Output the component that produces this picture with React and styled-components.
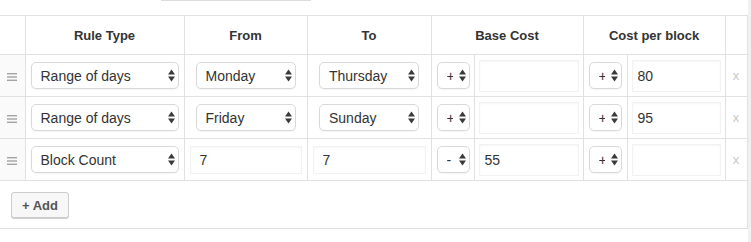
import React from 'react';
import styled, { createGlobalStyle } from 'styled-components';

const GlobalStyle = createGlobalStyle`
  html, body {
    margin: 0;
    padding: 0;
    background: #f1f1f1;
  }
  body {
    font-family: "Liberation Sans", Arial, sans-serif;
    color: #333;
  }
`;

const Panel = styled.div`
  width: 748px;
  min-height: 242px;
  background: #fff;
`;

const TopField = styled.div`
  margin-left: 161px;
  width: 150px;
  height: 1px;
  background: #ddd;
  margin-bottom: 14px;
`;

const Table = styled.table`
  width: 747px;
  border-collapse: collapse;
  table-layout: fixed;

  th, td {
    border: 1px solid #e1e1e1;
    padding: 0;
  }
  tr > :first-child {
    border-left: none;
  }
`;

const HeadCell = styled.th`
  height: 38px;
  font-size: 13px;
  font-weight: bold;
  color: #333;
  text-align: center;
  vertical-align: middle;
`;

const Cell = styled.td`
  height: 41px;
  vertical-align: middle;
  padding: 0 ${p => p.$pad ?? 5}px !important;
`;

const HandleCell = styled.td`
  height: 41px;
  background: #fafafa;
  text-align: center;
  vertical-align: middle;
`;

const DeleteCell = styled.td`
  text-align: center;
  vertical-align: middle;
  color: #c8c8c8;
  font-size: 13px;
`;

const SelectBox = styled.div`
  position: relative;
  width: ${p => (p.$width ? `${p.$width}px` : '100%')};
  margin: ${p => (p.$center ? '0 auto' : '0')};
`;

const NativeSelect = styled.select`
  appearance: none;
  -webkit-appearance: none;
  display: block;
  width: 100%;
  height: 27px;
  margin: 0;
  border: 1px solid #d9d9d9;
  border-radius: 5px;
  background: #fff;
  box-shadow: 0 1px 1px rgba(0, 0, 0, 0.04);
  font: 14px "Liberation Sans", Arial, sans-serif;
  color: #333;
  padding: 0 16px 0 ${p => p.$pad ?? 9}px;
  outline: none;
`;

const Arrows = styled.svg`
  position: absolute;
  right: 4px;
  top: 7px;
  pointer-events: none;
`;

const TextInput = styled.input`
  display: block;
  box-sizing: border-box;
  width: 100%;
  height: ${p => p.$h ?? 30}px;
  margin: 0;
  border: 1px solid #f2f2f2;
  box-shadow: inset 0 1px 2px rgba(0, 0, 0, 0.04);
  background: #fff;
  font: 14px "Liberation Sans", Arial, sans-serif;
  color: #333;
  padding: 0 0 0 ${p => p.$pad ?? 8}px;
  outline: none;
`;

const FootCell = styled.td`
  padding: 11px 11px 10px !important;
`;

const AddButton = styled.button`
  display: block;
  height: 26px;
  width: 58px;
  padding: 0;
  border: 1px solid #cdcdcd;
  border-radius: 3px;
  background: #f7f7f7;
  box-shadow: 0 1px 0 #cfcfcf;
  font: bold 13px "Liberation Sans", Arial, sans-serif;
  color: #555;
  cursor: pointer;
`;

function Select({ value, options, width, center, pad }) {
  return (
    <SelectBox $width={width} $center={center}>
      <NativeSelect defaultValue={value} $pad={pad}>
        {options.map(o => (
          <option key={o}>{o}</option>
        ))}
      </NativeSelect>
      <Arrows width="7" height="13" viewBox="0 0 7 13">
        <polygon points="3.5,0.5 7,5.5 0,5.5" fill="#3a3a3a" />
        <polygon points="0,7.5 7,7.5 3.5,12.5" fill="#3a3a3a" />
      </Arrows>
    </SelectBox>
  );
}

function Handle() {
  return (
    <svg width="10" height="8" viewBox="0 0 10 8">
      <rect x="0" y="0" width="10" height="1.4" fill="#a3a3a3" />
      <rect x="0" y="3.3" width="10" height="1.4" fill="#a3a3a3" />
      <rect x="0" y="6.6" width="10" height="1.4" fill="#a3a3a3" />
    </svg>
  );
}

const ruleTypes = ['Range of days', 'Block Count', 'Date range', 'Time range'];
const days = ['Monday', 'Tuesday', 'Wednesday', 'Thursday', 'Friday', 'Saturday', 'Sunday'];
const signs = ['+', '-', '×', '÷'];

const rules = [
  { type: 'Range of days', from: 'Monday', to: 'Thursday', baseSign: '+', base: '', costSign: '+', cost: '80' },
  { type: 'Range of days', from: 'Friday', to: 'Sunday', baseSign: '+', base: '', costSign: '+', cost: '95' },
  { type: 'Block Count', from: '7', to: '7', baseSign: '-', base: '55', costSign: '+', cost: '', plain: true },
];

export default function App() {
  return (
    <Panel>
      <GlobalStyle />
      <TopField />
      <Table>
        <colgroup>
          <col style={{ width: 25 }} />
          <col style={{ width: 159 }} />
          <col style={{ width: 123 }} />
          <col style={{ width: 124 }} />
          <col style={{ width: 43 }} />
          <col style={{ width: 109 }} />
          <col style={{ width: 44 }} />
          <col style={{ width: 98 }} />
          <col style={{ width: 22 }} />
        </colgroup>
        <thead>
          <tr>
            <HeadCell />
            <HeadCell>Rule Type</HeadCell>
            <HeadCell>From</HeadCell>
            <HeadCell>To</HeadCell>
            <HeadCell colSpan={2}>Base Cost</HeadCell>
            <HeadCell colSpan={2}>Cost per block</HeadCell>
            <HeadCell />
          </tr>
        </thead>
        <tbody>
          {rules.map((r, i) => (
            <tr key={i}>
              <HandleCell>
                <Handle />
              </HandleCell>
              <Cell>
                <Select value={r.type} options={ruleTypes} />
              </Cell>
              {r.plain ? (
                <>
                  <Cell $pad={5}>
                    <TextInput defaultValue={r.from} $pad={9} $h={28} />
                  </Cell>
                  <Cell $pad={5}>
                    <TextInput defaultValue={r.to} $pad={9} $h={28} />
                  </Cell>
                </>
              ) : (
                <>
                  <Cell>
                    <Select value={r.from} options={days} width={100} center />
                  </Cell>
                  <Cell>
                    <Select value={r.to} options={days} width={100} center />
                  </Cell>
                </>
              )}
              <Cell>
                <Select value={r.baseSign} options={signs} width={33} pad={9} />
              </Cell>
              <Cell $pad={4}>
                <TextInput defaultValue={r.base} $pad={5} $h={32} />
              </Cell>
              <Cell>
                <Select value={r.costSign} options={signs} width={33} pad={9} />
              </Cell>
              <Cell $pad={4}>
                <TextInput defaultValue={r.cost} $pad={5} $h={32} />
              </Cell>
              <DeleteCell>x</DeleteCell>
            </tr>
          ))}
        </tbody>
        <tfoot>
          <tr>
            <FootCell colSpan={9}>
              <AddButton>+ Add</AddButton>
            </FootCell>
          </tr>
        </tfoot>
      </Table>
    </Panel>
  );
}
